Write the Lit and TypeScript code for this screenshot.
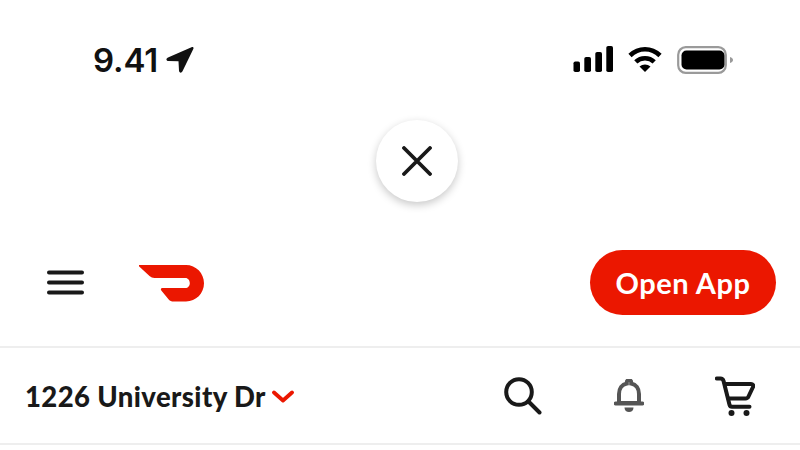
import { LitElement, html, css } from "lit";
import { customElement } from "lit/decorators.js";

@customElement("app-root")
export class AppRoot extends LitElement {
  static styles = css`
    :host { display: block; width: 800px; height: 450px; overflow: hidden; background: #fff; font-family: "Lato", "Liberation Sans", sans-serif; color: #191919; }
    svg { display: block; flex: none; }
    .status { height: 120px; box-sizing: border-box; padding: 46px 66px 0 93px; display: flex; align-items: flex-start; }
    .time { font: 600 33px/28px "Inter", sans-serif; color: #111; height: 28px; letter-spacing: -.1px; }
    .arrow { margin: 0 0 0 8px; }
    .spacer { flex: 1; }
    .signal { margin-right: 15px; }
    .wifi { margin-right: 15px; }
    .close-row { height: 82px; padding-left: 376px; }
    .close { width: 82px; height: 82px; border-radius: 50%; background: #fff; box-shadow: 0 3px 8px rgba(0,0,0,.22); display: flex; align-items: center; justify-content: center; }
    .nav { height: 146px; box-sizing: border-box; padding: 48px 24px 0 47px; display: flex; align-items: flex-start; border-bottom: 2px solid #eeeeee; }
    .menu { margin: 20px 55px 0 0; }
    .logo { margin-top: 15px; }
    .open { width: 186px; height: 65px; border-radius: 33px; background: #eb1700; color: #fff; display: flex; align-items: center; justify-content: center; font: 700 29px/1 "Lato", sans-serif; letter-spacing: .55px; }
    .addr { height: 97px; box-sizing: border-box; padding: 0 45px 0 25px; display: flex; align-items: center; border-bottom: 2px solid #eeeeee; }
    .street { font: 900 27.5px/1 "Lato", sans-serif; color: #191919; letter-spacing: .4px; padding-top: 2px; }
    .chev { margin: 2px 0 0 6px; }
    .search { margin-right: 72px; }
    .bell { margin-right: 71px; }
  `;

  render() {
    return html`
      <div class="status">
        <span class="time">9.41</span>
        <svg class="arrow" width="28" height="27" viewBox="0 0 28 27"><path d="M25.500 1.200 2 11.500C-.5 12.700.2 15 2.500 15L12.500 15.200 13 24.800C13.200 27 15.500 27.300 16.500 25.300L27.300 3C28 1.400 27 .5 25.500 1.200Z" fill="#111"/></svg>
        <span class="spacer"></span>
        <svg class="signal" width="40" height="26" viewBox="0 0 40 26" fill="#000">
          <rect x="0.500" y="15.500" width="6.500" height="10.500" rx="1.800"/>
          <rect x="11.300" y="11" width="6.700" height="15" rx="1.800"/>
          <rect x="22.300" y="6" width="6.700" height="20" rx="1.800"/>
          <rect x="33.300" y="0" width="6.700" height="26" rx="1.800"/>
        </svg>
        <svg class="wifi" width="34" height="26" viewBox="0 0 34 26">
          <g fill="none" stroke="#000" stroke-width="4.600">
            <path d="M2 9.500C10.500 1.200 23.500 1.200 32 9.500"/>
            <path d="M7.800 15.800c5-4.800 13.400-4.800 18.400 0"/>
          </g>
          <path d="M11.500 20.500c3.300-2.800 7.700-2.800 11 0L17 26Z" fill="#000"/>
        </svg>
        <svg width="57" height="28" viewBox="0 0 57 28">
          <rect x="1.200" y="1.200" width="47.600" height="25.600" rx="7.500" fill="none" stroke="#9a9a9a" stroke-width="2.200"/>
          <rect x="4.500" y="4.500" width="43" height="19" rx="5" fill="#000"/>
          <path d="M53 11v6c1.800-.5 3-1.600 3-3s-1.200-2.500-3-3Z" fill="#9a9a9a"/>
        </svg>
      </div>
      <div class="close-row">
        <div class="close">
          <svg width="30" height="30" viewBox="0 0 30 30"><path d="M2 2 28 28M28 2 2 28" stroke="#191919" stroke-width="3.800" stroke-linecap="round"/></svg>
        </div>
      </div>
      <div class="nav">
        <svg class="menu" width="37" height="25" viewBox="0 0 37 25"><path d="M2 2.500H35M2 12.500H35M2 22.500H35" stroke="#191919" stroke-width="4" stroke-linecap="round"/></svg>
        <svg class="logo" width="65" height="37" viewBox="0 0 65 37"><path d="M.6 0H47C57 0 65 8.200 65 18.300 65 28.400 57 36.500 47 36.500H34.500C32.500 36.500 31 35.800 29.700 34.400L22.300 25.500C21.300 24.300 22 23 23.500 23H46.500C49 23 50.800 20.800 50.800 18.200 50.800 15.400 49 13 46.500 13H15.500C13.500 13 12 12.300 10.500 11L.2 1.600C-.4 1-.2 0 .6 0Z" fill="#eb1700"/></svg>
        <span class="spacer"></span>
        <div class="open">Open App</div>
      </div>
      <div class="addr">
        <span class="street">1226 University Dr</span>
        <svg class="chev" width="22" height="13" viewBox="0 0 22 13"><path d="M2 2.500 11 10.500 20 2.500" fill="none" stroke="#eb1700" stroke-width="3.800" stroke-linecap="round" stroke-linejoin="round"/></svg>
        <span class="spacer"></span>
        <svg class="search" width="38" height="38" viewBox="0 0 38 38"><circle cx="15" cy="15" r="12.800" fill="none" stroke="#191919" stroke-width="4"/><path d="M24.500 24.500 35.500 35.500" stroke="#191919" stroke-width="4" stroke-linecap="round"/></svg>
        <svg class="bell" width="30" height="34" viewBox="0 0 30 34"><path d="M12.800 4.500V3.200a2.200 2.200 0 0 1 4.400 0V4.500C22 5.500 25 9.500 25 15V24H5V15C5 9.500 8 5.500 12.800 4.500Z" fill="none" stroke="#555" stroke-width="4"/><path d="M1.500 24.500H28.500" stroke="#555" stroke-width="3.800" stroke-linecap="round"/><path d="M10.500 28.500H19.500C19.500 31.500 17.500 33 15 33S10.500 31.500 10.500 28.500Z" fill="#555"/></svg>
        <svg width="40" height="40" viewBox="0 0 40 40"><path d="M1.800 2.500H5.500C7 2.500 8 3.300 8.500 4.800L14.500 28.800C14.800 30 15.800 30.800 17 30.800H34.500" fill="none" stroke="#191919" stroke-width="4" stroke-linecap="round" stroke-linejoin="round"/><path d="M9.500 8H36C37.800 8 38.700 9.500 38 11L33.500 20.500C32.800 22 31.800 22.500 30.500 22.500H13" fill="none" stroke="#191919" stroke-width="4" stroke-linejoin="round"/><circle cx="16.500" cy="37" r="3" fill="#191919"/><circle cx="31.500" cy="37" r="3" fill="#191919"/></svg>
      </div>
    `;
  }
}
